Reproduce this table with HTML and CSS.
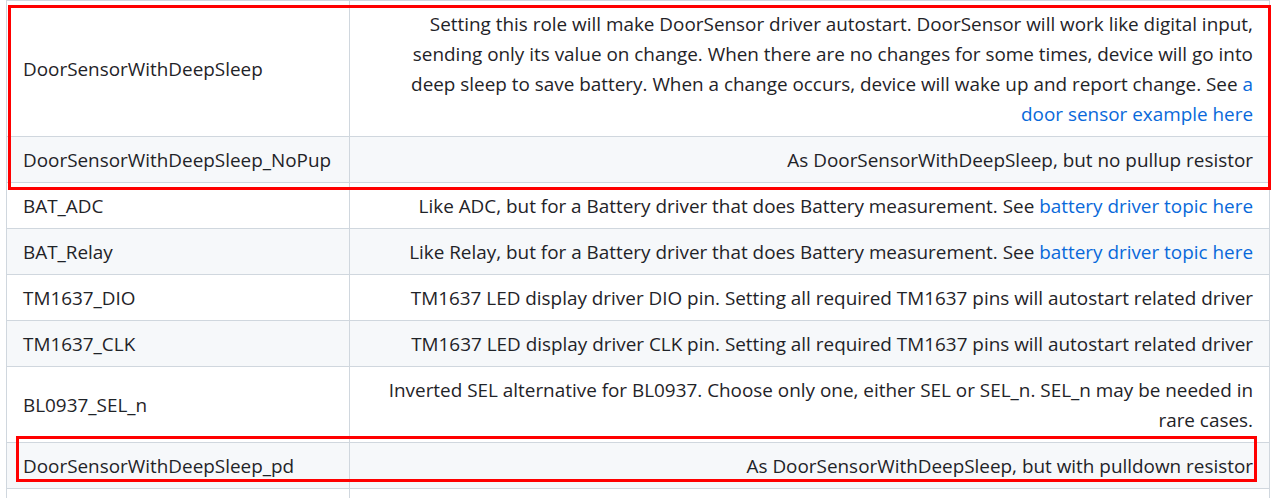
FILE: index.html
```html
<!DOCTYPE html>
<html lang="en">
<head>
<meta charset="utf-8">
<title>Roles</title>
<link rel="stylesheet" href="styles.css">
</head>
<body>
<div class="page">
  <table class="roles">
    <colgroup><col class="c-name"><col class="c-desc"></colgroup>
    <tbody>
      <tr>
        <td>DoorSensorWithDeepSleep</td>
        <td>Setting this role will make DoorSensor driver autostart. DoorSensor will work like digital input, sending only its value on change. When there are no changes for some times, device will go into deep sleep to save battery. When a change occurs, device will wake up and report change. See <a href="#">a door sensor example here</a></td>
      </tr>
      <tr>
        <td>DoorSensorWithDeepSleep_NoPup</td>
        <td>As DoorSensorWithDeepSleep, but no pullup resistor</td>
      </tr>
      <tr>
        <td>BAT_ADC</td>
        <td>Like ADC, but for a Battery driver that does Battery measurement. See <a href="#">battery driver topic here</a></td>
      </tr>
      <tr>
        <td>BAT_Relay</td>
        <td>Like Relay, but for a Battery driver that does Battery measurement. See <a href="#">battery driver topic here</a></td>
      </tr>
      <tr>
        <td>TM1637_DIO</td>
        <td>TM1637 LED display driver DIO pin. Setting all required TM1637 pins will autostart related driver</td>
      </tr>
      <tr>
        <td>TM1637_CLK</td>
        <td>TM1637 LED display driver CLK pin. Setting all required TM1637 pins will autostart related driver</td>
      </tr>
      <tr>
        <td>BL0937_SEL_n</td>
        <td>Inverted SEL alternative for BL0937. Choose only one, either SEL or SEL_n. SEL_n may be needed in rare cases.</td>
      </tr>
      <tr>
        <td>DoorSensorWithDeepSleep_pd</td>
        <td>As DoorSensorWithDeepSleep, but with pulldown resistor</td>
      </tr>
      <tr>
        <td>&nbsp;</td>
        <td>&nbsp;</td>
      </tr>
    </tbody>
  </table>
  <div class="mark mark-top"></div>
  <div class="mark mark-bottom"></div>
</div>
</body>
</html>
```
FILE: styles.css
```css
html, body {
  margin: 0;
  padding: 0;
  background: #ffffff;
}

.page {
  position: relative;
  padding: 0 0 0 6px;
  font-family: "Open Sans", "Noto Sans", sans-serif;
  font-size: 18.9px;
  line-height: 30px;
  color: #1f2328;
}

.roles {
  border-collapse: collapse;
  border-spacing: 0;
  table-layout: fixed;
  width: 1264px;
}

.c-name { width: 343px; }

.roles td {
  border: 1px solid #d0d7de;
  padding: 7.5px 16px;
  vertical-align: middle;
}

.roles td + td {
  text-align: right;
}

.roles tr:nth-child(even) td {
  background: #f6f8fa;
}

.roles a {
  color: #0969da;
  text-decoration: none;
}

.mark {
  position: absolute;
  border: 3px solid #ff0000;
  box-sizing: border-box;
  pointer-events: none;
}

.mark-top {
  left: 8px;
  top: 5px;
  width: 1263px;
  height: 185px;
}

.mark-bottom {
  left: 16px;
  top: 436px;
  width: 1241px;
  height: 46px;
}
```
